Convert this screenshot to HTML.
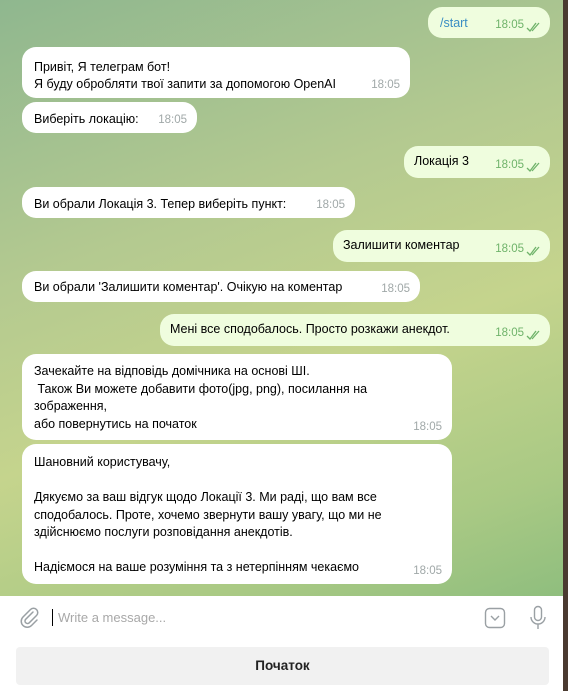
<!DOCTYPE html>
<html><head><meta charset="utf-8"><style>
*{margin:0;padding:0;box-sizing:border-box}
body{width:568px;height:691px;overflow:hidden;position:relative;font-family:"Liberation Sans","DejaVu Sans",sans-serif;font-size:12.5px;color:#000;background:#4a3a30}
#chat{position:absolute;left:0;top:0;width:563px;height:596px;background:linear-gradient(160deg,#8fb78f 0%,#b3c990 35%,#c5d48d 60%,#a9c984 85%,#8fbe7e 100%)}
.b{position:absolute;background:#fff;border-radius:14px;padding:0 12px;line-height:17px}
.o{background:#effdde}
.t{position:absolute;right:10px;bottom:4px;font-size:11.5px;color:#a0a8a8}
.o .t{color:#6fb36a;right:26px}
.ck{position:absolute;right:8px;bottom:6px;width:16px;height:10px}
#inp{position:absolute;left:0;top:596px;width:563px;height:95px;background:#fff}
#btn{position:absolute;left:16px;top:647px;width:533px;height:38px;background:#f1f1f1;border-radius:4px;text-align:center;line-height:38px;font-weight:bold;font-size:13.5px;color:#222}
</style></head><body>
<div id="chat">
<div class="b o" style="left:428px;top:7px;width:122px;height:31px;padding-top:8px;color:#3a8ec4">/start<span class="t">18:05</span><svg class="ck" viewBox="0 0 16 10"><path d="M1 6l3 3 6-8M6 9l7-8" fill="none" stroke="#6fb36a" stroke-width="1.3"/></svg></div>
<div class="b" style="left:22px;top:47px;width:388px;height:51px;padding-top:12px">Привіт, Я телеграм бот!<br>Я буду обробляти твої запити за допомогою OpenAI<span class="t">18:05</span></div>
<div class="b" style="left:22px;top:102px;width:175px;height:31px;padding-top:9px">Виберіть локацію:<span class="t">18:05</span></div>
<div class="b o" style="left:404px;top:146px;width:146px;height:32px;padding-top:7px;padding-left:10px">Локація 3<span class="t">18:05</span><svg class="ck" viewBox="0 0 16 10"><path d="M1 6l3 3 6-8M6 9l7-8" fill="none" stroke="#6fb36a" stroke-width="1.3"/></svg></div>
<div class="b" style="left:22px;top:187px;width:333px;height:31px;padding-top:9px">Ви обрали Локація 3. Тепер виберіть пункт:<span class="t">18:05</span></div>
<div class="b o" style="left:333px;top:230px;width:217px;height:32px;padding-top:7px;padding-left:10px">Залишити коментар<span class="t">18:05</span><svg class="ck" viewBox="0 0 16 10"><path d="M1 6l3 3 6-8M6 9l7-8" fill="none" stroke="#6fb36a" stroke-width="1.3"/></svg></div>
<div class="b" style="left:22px;top:271px;width:398px;height:31px;padding-top:8px">Ви обрали 'Залишити коментар'. Очікую на коментар<span class="t">18:05</span></div>
<div class="b o" style="left:160px;top:314px;width:390px;height:32px;padding-top:7px;padding-left:10px">Мені все сподобалось. Просто розкажи анекдот.<span class="t">18:05</span><svg class="ck" viewBox="0 0 16 10"><path d="M1 6l3 3 6-8M6 9l7-8" fill="none" stroke="#6fb36a" stroke-width="1.3"/></svg></div>
<div class="b" style="left:22px;top:354px;width:430px;height:86px;padding-top:9px;line-height:17.5px">Зачекайте на відповідь домічника на основі ШІ.<br>&nbsp;Також Ви можете добавити фото(jpg, png), посилання на зображення,<br>або повернутись на початок<span class="t">18:05</span></div>
<div class="b" style="left:22px;top:444px;width:430px;height:140px;padding-top:10px;line-height:17.5px">Шановний користувачу,<br><br>Дякуємо за ваш відгук щодо Локації 3. Ми раді, що вам все сподобалось. Проте, хочемо звернути вашу увагу, що ми не здійснюємо послуги розповідання анекдотів.<br><br>Надіємося на ваше розуміння та з нетерпінням чекаємо<span class="t">18:05</span></div>
</div>
<div id="inp">
<svg style="position:absolute;left:19px;top:11px" width="22" height="22" viewBox="0 0 22 22"><path d="M14 5l-7.5 7.5a2.5 2.5 0 0 0 3.5 3.5L17.5 8.5a4.2 4.2 0 0 0-6-6L4 10a6 6 0 0 0 8.5 8.5L18 13" fill="none" stroke="#9aa0a4" stroke-width="1.5" stroke-linecap="round"/></svg>
<div style="position:absolute;left:52px;top:13px;width:1px;height:17px;background:#000"></div>
<div style="position:absolute;left:58px;top:14px;color:#a8a8a8;font-size:13px">Write a message...</div>
<svg style="position:absolute;left:484px;top:11px" width="22" height="22" viewBox="0 0 22 22"><rect x="1.5" y="1.5" width="19" height="19" rx="4" fill="none" stroke="#9aa0a4" stroke-width="1.4"/><path d="M7 9l4 4 4-4" fill="none" stroke="#9aa0a4" stroke-width="1.4"/></svg>
<svg style="position:absolute;left:528px;top:9px" width="20" height="26" viewBox="0 0 20 26"><rect x="6.5" y="1.5" width="7" height="14" rx="3.5" fill="none" stroke="#9aa0a4" stroke-width="1.4"/><path d="M3 12a7 7 0 0 0 14 0M10 19v5" fill="none" stroke="#9aa0a4" stroke-width="1.4"/></svg>
</div>
<div id="btn">Початок</div>
</body></html>
